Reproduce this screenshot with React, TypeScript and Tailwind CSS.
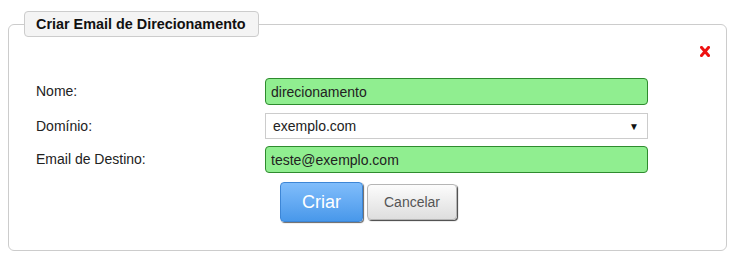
import { useState } from 'react';

// Form for creating a forwarding email
export default function App() {
  const [nome, setNome] = useState('direcionamento');
  const [destino, setDestino] = useState('teste@exemplo.com');

  const labelCls = 'w-[229px] shrink-0 text-[14px] text-[#222]';
  const greenInput =
    'w-[383px] h-[27px] rounded-[4px] border border-[#2e8b2e] bg-[#90ee90] px-[5px] text-[14px] text-[#222] outline-none';

  return (
    <div className="min-h-[257px] bg-white pt-[11px] font-['Liberation_Sans',Arial,sans-serif]">
      <fieldset className="ml-2 mr-[5px] h-[240px] rounded-[6px] border border-[#cccccc]">
        <legend className="ml-[15px] h-[26px] rounded-[4px] border border-[#cccccc] bg-[#f4f4f4] pl-[11px] pr-[12px] text-[14.4px] leading-[24px] font-bold text-[#111]">
          Criar Email de Direcionamento
        </legend>

        <div className="flex justify-end pr-[16px] pt-[9px]">
          <svg width="10" height="11" viewBox="0 0 10 11" aria-label="fechar">
            <path d="M1.5 1.5 L8.5 9.5 M8.5 1.5 L1.5 9.5" stroke="#ee1111" strokeWidth="3" strokeLinecap="square" />
          </svg>
        </div>

        <div className="pl-[27px] pt-[21px]">
          <div className="flex items-center">
            <span className={labelCls}>Nome:</span>
            <input className={greenInput} value={nome} onChange={(e) => setNome(e.target.value)} />
          </div>

          <div className="mt-[8px] flex items-center">
            <span className={labelCls}>Domínio:</span>
            <div className="flex h-[26px] w-[383px] items-center justify-between border border-[#cccccc] bg-white pl-[7px] pr-[8px] text-[14px] text-[#222]">
              <span>exemplo.com</span>
              <span className="text-[10px] text-[#111]">▼</span>
            </div>
          </div>

          <div className="mt-[7px] flex items-center">
            <span className={labelCls}>Email de Destino:</span>
            <input className={greenInput} value={destino} onChange={(e) => setDestino(e.target.value)} />
          </div>

          <div className="mt-[9px] flex items-center gap-[4px] pl-[244px]">
            <button className="h-[40px] w-[83px] rounded-[4px] border border-[#3d86d6] bg-gradient-to-b from-[#80bdfb] to-[#4898ea] text-[18px] text-white shadow-[1px_1px_1px_rgba(0,0,0,0.6)]">
              Criar
            </button>
            <button className="h-[36px] w-[90px] rounded-[4px] border border-[#b5b5b5] bg-gradient-to-b from-[#fcfcfc] to-[#dedede] text-[14px] text-[#555] shadow-[1px_1px_1px_rgba(0,0,0,0.75)]">
              Cancelar
            </button>
          </div>
        </div>
      </fieldset>
    </div>
  );
}
